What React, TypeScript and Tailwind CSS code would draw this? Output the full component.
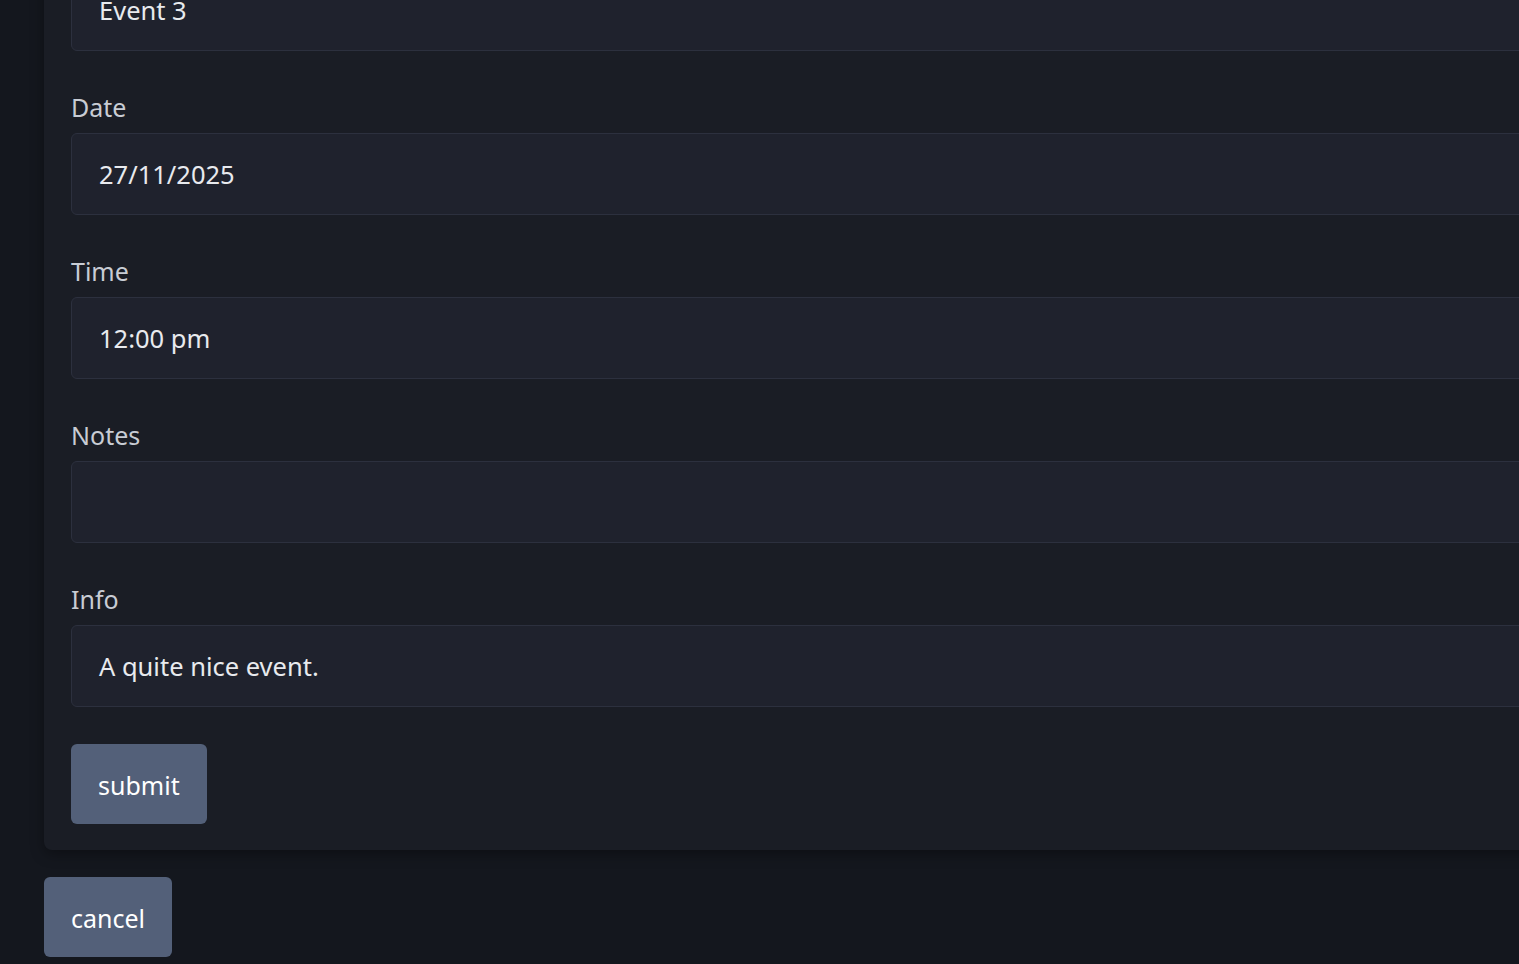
import React from "react";

const fields: { label: string; value: string }[] = [
  { label: "Name", value: "Event 3" },
  { label: "Date", value: "27/11/2025" },
  { label: "Time", value: "12:00 pm" },
  { label: "Notes", value: "" },
  { label: "Info", value: "A quite nice event." },
];

export default function App() {
  return (
    <div
      className="h-[964px] w-[1519px] overflow-hidden bg-[#14171e] pl-[44px]"
      style={{ fontFamily: '"Noto Sans", "Open Sans", sans-serif' }}
    >
      <div className="-mt-[98px] w-[1600px] rounded-lg bg-[#1a1d25] pl-[27px] pt-[27px] pb-[26px] shadow-[0_4px_14px_rgba(0,0,0,0.35)]">
        <div className="flex flex-col gap-[42px]">
          {fields.map((f) => (
            <div key={f.label} className="flex flex-col">
              <label className="mb-[8px] flex h-8 items-center pb-[4px] text-[25px] leading-8 text-[#c8ccd4]">{f.label}</label>
              <div className="flex h-[82px] w-[1520px] items-center rounded-md border border-[#2c303e] bg-[#1f222d] pl-[27px] text-[25.5px] text-[#e8eaee]">
                {f.value}
              </div>
            </div>
          ))}
        </div>
        <button className="mt-[37px] h-[80px] rounded-md bg-[#536079] px-[27px] pt-[4px] text-[25px] text-white">
          submit
        </button>
      </div>
      <button className="mt-[27px] h-[80px] rounded-md bg-[#536079] px-[27px] pt-[4px] text-[25px] text-white">
        cancel
      </button>
    </div>
  );
}
